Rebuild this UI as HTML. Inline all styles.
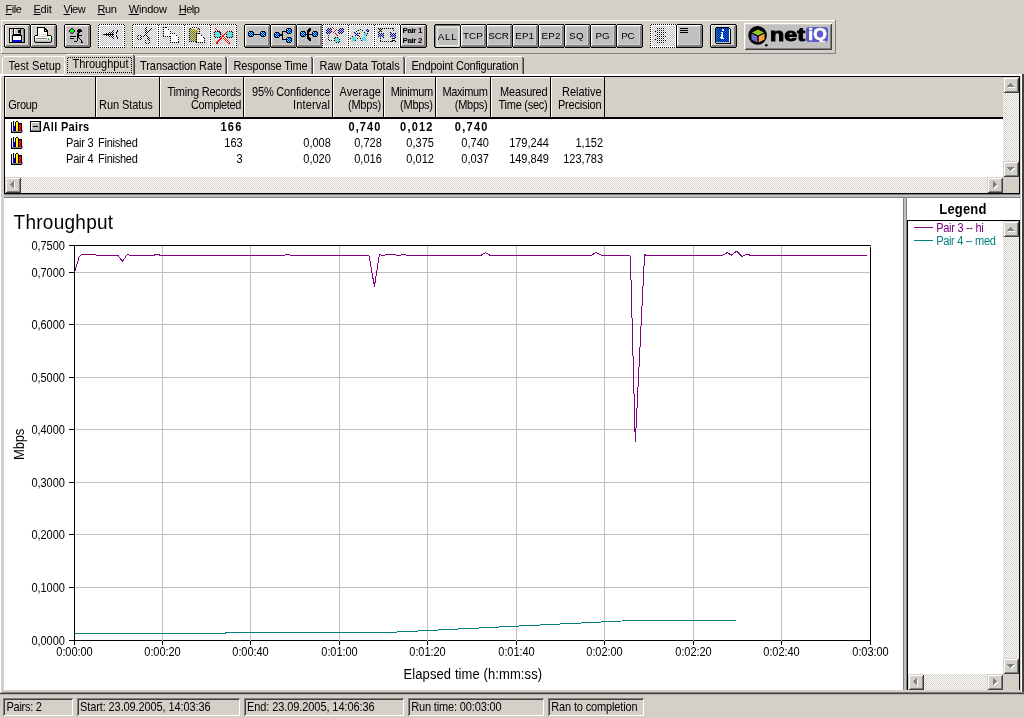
<!DOCTYPE html>
<html lang="en"><head><meta charset="utf-8"><title>Chariot - Throughput</title>
<style>
html,body{margin:0;padding:0}
body{width:1024px;height:718px;overflow:hidden;background:#d4d0c8;position:relative;font-family:"Liberation Sans",sans-serif;font-size:11px;color:#000}
#app{position:absolute;left:0;top:0;width:1024px;height:718px;overflow:hidden;will-change:transform}
#app div,#app span.t,.abs{position:absolute}
.t{white-space:nowrap;line-height:13px;font-size:11px}
.u{transform:scaleY(1.125);transform-origin:0 10px}
.u13{transform:scaleY(1.11);transform-origin:0 12px}
.u19{transform:scaleY(1.077);transform-origin:0 17px}
.t u{text-decoration:underline;text-decoration-thickness:1px;text-underline-offset:1px;text-decoration-skip-ink:none}
.b::before{content:"";position:absolute;left:1px;right:1px;top:0;bottom:0;border-top:1px solid #000;border-bottom:1px solid #000}
.b::after{content:"";position:absolute;top:1px;bottom:1px;left:0;right:0;border-left:1px solid #000;border-right:1px solid #000}
.b{background:linear-gradient(#fff,#fff) 1px 1px/24px 1px no-repeat,linear-gradient(#fff,#fff) 1px 1px/1px 21px no-repeat,linear-gradient(#808080,#808080) 2px 21px/24px 2px no-repeat,linear-gradient(#808080,#808080) 24px 2px/2px 21px no-repeat,linear-gradient(#808080,#808080) 25px 1px/1px 1px no-repeat,linear-gradient(#808080,#808080) 1px 22px/1px 1px no-repeat,linear-gradient(#d4d0c8,#d4d0c8) 1px 1px/25px 22px no-repeat}
.b.bp{background:linear-gradient(#808080,#808080) 1px 1px/25px 1px no-repeat,linear-gradient(#808080,#808080) 1px 1px/1px 22px no-repeat,linear-gradient(#d4d0c8,#d4d0c8) 1px 1px/25px 22px no-repeat}
.bd{background:repeating-conic-gradient(#000 0 25%,#fff 0 50%) 0 0/2px 2px}
.bd i{position:absolute;left:1px;top:1px;right:1px;bottom:1px;background:#fff}
.bd b{position:absolute;left:2px;top:2px;right:2px;bottom:2px;background:repeating-conic-gradient(#c0c0c0 0 25%,#fff 0 50%) 0 0/2px 2px}
.rb{background:#d4d0c8;box-shadow:inset 1px 1px 0 #fff,inset -1px -1px 0 #404040,inset 2px 2px 0 #d4d0c8,inset -2px -2px 0 #808080}
.sb{width:16px;height:16px;background:#d4d0c8;box-shadow:inset 1px 1px 0 #d4d0c8,inset -1px -1px 0 #404040,inset 2px 2px 0 #fff,inset -2px -2px 0 #808080}
.trk{background:repeating-conic-gradient(#fff 0 25%,#d4d0c8 0 50%) 0 0/2px 2px}
.sf{box-shadow:inset 1px 1px 0 #808080,inset -1px -1px 0 #fff,inset 2px 2px 0 #404040,inset -2px -2px 0 #d4d0c8}
.focus{background:repeating-conic-gradient(#000 0 25%,#d4d0c8 0 50%) 1px 1px/2px 2px}
.focus i{position:absolute;left:1px;top:1px;right:1px;bottom:1px;background:#d4d0c8}
</style></head>
<body><div id="app">
<span class="t " style="letter-spacing:-0.431px;left:5.50px;top:3px"><u>F</u>ile</span>
<span class="t " style="letter-spacing:-0.239px;left:33.50px;top:3px"><u>E</u>dit</span>
<span class="t " style="letter-spacing:-0.486px;left:63.50px;top:3px"><u>V</u>iew</span>
<span class="t " style="letter-spacing:-0.393px;left:97.50px;top:3px"><u>R</u>un</span>
<span class="t " style="letter-spacing:-0.171px;left:128.70px;top:3px"><u>W</u>indow</span>
<span class="t " style="letter-spacing:-0.506px;left:178.70px;top:3px"><u>H</u>elp</span>
<div style="left:1px;top:20px;width:835px;height:1px;background:#fff;"></div>
<div style="left:1px;top:20px;width:1px;height:34px;background:#fff;"></div>
<div style="left:1px;top:53px;width:835px;height:1px;background:#808080;"></div>
<div style="left:835px;top:20px;width:1px;height:34px;background:#808080;"></div>
<div class="b" style="left:4px;top:24px;width:27px;height:24px"></div>
<div class="b" style="left:30px;top:24px;width:27px;height:24px"></div>
<div class="b" style="left:64px;top:24px;width:27px;height:24px"></div>
<div class="bd" style="left:98px;top:24px;width:27px;height:24px"><i></i><b></b></div>
<div class="bd" style="left:132px;top:24px;width:27px;height:24px"><i></i><b></b></div>
<div class="bd" style="left:158px;top:24px;width:27px;height:24px"><i></i><b></b></div>
<div class="bd" style="left:184px;top:24px;width:27px;height:24px"><i></i><b></b></div>
<div class="bd" style="left:210px;top:24px;width:27px;height:24px"><i></i><b></b></div>
<div class="b" style="left:244px;top:24px;width:27px;height:24px"></div>
<div class="b" style="left:270px;top:24px;width:27px;height:24px"></div>
<div class="b" style="left:296px;top:24px;width:27px;height:24px"></div>
<div class="bd" style="left:322px;top:24px;width:27px;height:24px"><i></i><b></b></div>
<div class="bd" style="left:348px;top:24px;width:27px;height:24px"><i></i><b></b></div>
<div class="bd" style="left:374px;top:24px;width:27px;height:24px"><i></i><b></b></div>
<div class="b" style="left:400px;top:24px;width:27px;height:24px"></div>
<div class="b bp" style="left:434px;top:24px;width:27px;height:24px"></div>
<div class="b" style="left:460px;top:24px;width:27px;height:24px"></div>
<div class="b" style="left:486px;top:24px;width:27px;height:24px"></div>
<div class="b" style="left:512px;top:24px;width:27px;height:24px"></div>
<div class="b" style="left:538px;top:24px;width:27px;height:24px"></div>
<div class="b" style="left:564px;top:24px;width:27px;height:24px"></div>
<div class="b" style="left:590px;top:24px;width:27px;height:24px"></div>
<div class="b" style="left:616px;top:24px;width:27px;height:24px"></div>
<div class="bd" style="left:650px;top:24px;width:27px;height:24px"><i></i><b></b></div>
<div class="b" style="left:676px;top:24px;width:27px;height:24px"></div>
<div class="b" style="left:710px;top:24px;width:27px;height:24px"></div>
<div class="rb" style="left:744px;top:23px;width:88px;height:27px"><i style="background:#c0c0c0;position:absolute;left:2px;top:2px;right:2px;bottom:2px"></i></div>
<svg class="abs" style="left:0;top:0" width="1024" height="60" shape-rendering="crispEdges"><defs><pattern id="p0" width="2" height="2" patternUnits="userSpaceOnUse"><rect x="0" y="0" width="1" height="1" fill="#fff"/><rect x="1" y="1" width="1" height="1" fill="#fff"/></pattern><pattern id="p1" width="2" height="2" patternUnits="userSpaceOnUse"><rect x="0" y="0" width="1" height="1" fill="#000"/><rect x="1" y="1" width="1" height="1" fill="#000"/></pattern><pattern id="p2" width="2" height="2" patternUnits="userSpaceOnUse"><rect x="0" y="0" width="1" height="1" fill="#808000"/><rect x="1" y="1" width="1" height="1" fill="#808000"/></pattern><pattern id="p3" width="2" height="2" patternUnits="userSpaceOnUse"><rect x="0" y="0" width="1" height="1" fill="#00ffff"/><rect x="1" y="1" width="1" height="1" fill="#00ffff"/></pattern><pattern id="p4" width="2" height="2" patternUnits="userSpaceOnUse"><rect x="1" y="0" width="1" height="1" fill="#00ffff"/><rect x="0" y="1" width="1" height="1" fill="#00ffff"/></pattern><pattern id="p5" width="2" height="2" patternUnits="userSpaceOnUse"><rect x="0" y="0" width="1" height="1" fill="#0000ff"/><rect x="1" y="1" width="1" height="1" fill="#0000ff"/></pattern><pattern id="p6" width="2" height="2" patternUnits="userSpaceOnUse"><rect x="0" y="0" width="1" height="1" fill="#008080"/><rect x="1" y="1" width="1" height="1" fill="#008080"/></pattern></defs><rect x="9" y="28" width="16" height="15" fill="#000"/><rect x="10" y="29" width="14" height="13" fill="#c0c0c0"/><rect x="10" y="29" width="1" height="13" fill="#fff"/><rect x="24" y="28" width="1" height="1" fill="#d4d0c8"/><rect x="13" y="29" width="8" height="6" fill="#000"/><rect x="14" y="29" width="6" height="5" fill="#d4d0c8"/><rect x="18" y="30" width="2" height="3" fill="#000"/><rect x="14" y="29" width="1" height="5" fill="#fff"/><rect x="12" y="35" width="10" height="7" fill="#000"/><rect x="13" y="36" width="8" height="4" fill="#fff"/><rect x="13" y="40" width="8" height="2" fill="#0000ff"/><rect x="23" y="29" width="1" height="13" fill="#808080"/><polygon points="37,27 44,27 48,31 48,36 37,36" fill="#000"/><polygon points="38,28 43.5,28 47,31.5 47,36 38,36" fill="#fff"/><rect x="44" y="28" width="1" height="3" fill="#000"/><rect x="44" y="31" width="3" height="1" fill="#000"/><rect x="45" y="29" width="1" height="1" fill="#000"/><rect x="46" y="30" width="1" height="1" fill="#000"/><rect x="45" y="30" width="1" height="1" fill="#d4d0c8"/><rect x="39" y="34" width="1" height="1" fill="#c0c0c0"/><rect x="41" y="34" width="1" height="1" fill="#c0c0c0"/><rect x="43" y="34" width="1" height="1" fill="#c0c0c0"/><rect x="45" y="34" width="1" height="1" fill="#c0c0c0"/><rect x="35" y="35" width="3" height="1" fill="#000"/><rect x="47" y="35" width="4" height="1" fill="#000"/><rect x="34" y="36" width="1" height="6" fill="#000"/><rect x="51" y="36" width="1" height="6" fill="#000"/><rect x="35" y="42" width="16" height="1" fill="#000"/><rect x="35" y="36" width="3" height="1" fill="#fff"/><rect x="48" y="36" width="3" height="1" fill="#fff"/><rect x="35" y="37" width="16" height="1" fill="#fff"/><rect x="35" y="38" width="16" height="1" fill="#fff"/><rect x="36" y="38" width="11" height="1" fill="#808080"/><rect x="35" y="39" width="16" height="1" fill="#e8e8e8"/><rect x="35" y="40" width="16" height="1" fill="#d4d0c8"/><rect x="35" y="41" width="16" height="1" fill="#b0b0b0"/><rect x="48" y="38" width="1" height="2" fill="#00c000"/><rect x="67" y="27" width="20" height="17" fill="#c0c0c0"/><rect x="247" y="27" width="20" height="17" fill="#c0c0c0"/><rect x="273" y="27" width="20" height="17" fill="#c0c0c0"/><rect x="299" y="27" width="20" height="17" fill="#c0c0c0"/><rect x="403" y="27" width="20" height="17" fill="#c0c0c0"/><rect x="463" y="27" width="20" height="17" fill="#c0c0c0"/><rect x="489" y="27" width="20" height="17" fill="#c0c0c0"/><rect x="515" y="27" width="20" height="17" fill="#c0c0c0"/><rect x="541" y="27" width="20" height="17" fill="#c0c0c0"/><rect x="567" y="27" width="20" height="17" fill="#c0c0c0"/><rect x="593" y="27" width="20" height="17" fill="#c0c0c0"/><rect x="619" y="27" width="20" height="17" fill="#c0c0c0"/><rect x="679" y="27" width="20" height="17" fill="#c0c0c0"/><rect x="438" y="28" width="20" height="17" fill="#c0c0c0"/><rect x="437" y="27" width="22" height="1" fill="url(#p0)"/><rect x="437" y="45" width="22" height="1" fill="url(#p0)"/><rect x="437" y="27" width="1" height="19" fill="url(#p0)"/><rect x="458" y="27" width="1" height="19" fill="url(#p0)"/><rect x="71" y="28" width="2" height="1" fill="#400040"/><rect x="71" y="33" width="2" height="1" fill="#400040"/><rect x="69" y="30" width="1" height="2" fill="#400040"/><rect x="74" y="30" width="1" height="2" fill="#400040"/><rect x="70" y="29" width="1" height="1" fill="#400040"/><rect x="73" y="29" width="1" height="1" fill="#400040"/><rect x="70" y="32" width="1" height="1" fill="#400040"/><rect x="73" y="32" width="1" height="1" fill="#400040"/><rect x="71" y="29" width="2" height="4" fill="#00ff00"/><rect x="70" y="30" width="4" height="2" fill="#00ff00"/><rect x="78" y="29" width="3" height="1" fill="#000"/><rect x="77" y="30" width="5" height="2" fill="#000"/><rect x="78" y="32" width="2" height="1" fill="#000"/><rect x="77" y="33" width="2" height="1" fill="#000"/><rect x="77" y="34" width="2" height="4" fill="#000"/><rect x="77" y="38" width="1" height="3" fill="#000"/><rect x="78" y="35" width="4" height="1" fill="#000"/><rect x="70" y="36" width="6" height="1" fill="#000"/><rect x="70" y="38" width="4" height="1" fill="#000"/><rect x="74" y="41" width="3" height="1" fill="#000"/><rect x="79" y="38" width="1" height="1" fill="#000"/><rect x="80" y="39" width="1" height="1" fill="#000"/><rect x="81" y="40" width="1" height="1" fill="#000"/><rect x="81" y="41" width="1" height="1" fill="#000"/><rect x="81" y="42" width="1" height="1" fill="#000"/><rect x="82" y="42" width="1" height="1" fill="#000"/><rect x="103" y="34" width="1" height="1" fill="#000"/><rect x="105" y="34" width="1" height="1" fill="#000"/><rect x="106" y="33" width="1" height="1" fill="#000"/><rect x="106" y="35" width="1" height="1" fill="#000"/><rect x="107" y="34" width="1" height="1" fill="#000"/><rect x="108" y="33" width="1" height="1" fill="#000"/><rect x="108" y="35" width="1" height="1" fill="#000"/><rect x="109" y="32" width="1" height="1" fill="#000"/><rect x="109" y="34" width="1" height="1" fill="#000"/><rect x="109" y="36" width="1" height="1" fill="#000"/><rect x="110" y="33" width="1" height="1" fill="#000"/><rect x="110" y="35" width="1" height="1" fill="#000"/><rect x="111" y="32" width="1" height="1" fill="#000"/><rect x="111" y="34" width="1" height="1" fill="#000"/><rect x="111" y="36" width="1" height="1" fill="#000"/><rect x="112" y="31" width="1" height="1" fill="#000"/><rect x="112" y="33" width="1" height="1" fill="#000"/><rect x="112" y="35" width="1" height="1" fill="#000"/><rect x="112" y="37" width="1" height="1" fill="#000"/><rect x="113" y="30" width="1" height="1" fill="#000"/><rect x="113" y="32" width="1" height="1" fill="#000"/><rect x="113" y="34" width="1" height="1" fill="#000"/><rect x="113" y="36" width="1" height="1" fill="#000"/><rect x="113" y="38" width="1" height="1" fill="#000"/><rect x="103" y="34" width="11" height="1" fill="url(#p1)"/><rect x="117" y="30" width="1" height="1" fill="#000"/><rect x="117" y="31" width="1" height="1" fill="#000"/><rect x="116" y="32" width="1" height="1" fill="#000"/><rect x="116" y="33" width="1" height="1" fill="#000"/><rect x="116" y="35" width="1" height="1" fill="#000"/><rect x="116" y="36" width="1" height="1" fill="#000"/><rect x="117" y="37" width="1" height="1" fill="#000"/><rect x="117" y="38" width="1" height="1" fill="#000"/><rect x="150" y="28" width="1" height="1" fill="#000"/><rect x="149" y="29" width="1" height="1" fill="#000"/><rect x="148" y="30" width="1" height="1" fill="#000"/><rect x="147" y="31" width="1" height="1" fill="#000"/><rect x="146" y="32" width="1" height="1" fill="#000"/><rect x="145" y="33" width="1" height="1" fill="#000"/><rect x="144" y="34" width="1" height="1" fill="#000"/><rect x="143" y="35" width="1" height="1" fill="#000"/><rect x="142" y="36" width="1" height="1" fill="#000"/><rect x="151" y="28" width="1" height="1" fill="#000"/><rect x="150" y="29" width="1" height="1" fill="#000"/><rect x="149" y="30" width="1" height="1" fill="#000"/><rect x="148" y="31" width="1" height="1" fill="#000"/><rect x="147" y="32" width="1" height="1" fill="#000"/><rect x="146" y="33" width="1" height="1" fill="#000"/><rect x="145" y="34" width="1" height="1" fill="#000"/><rect x="144" y="35" width="1" height="1" fill="#000"/><rect x="143" y="36" width="1" height="1" fill="#000"/><rect x="145" y="27" width="2" height="7" fill="#000"/><rect x="145" y="34" width="1" height="1" fill="#000"/><rect x="146" y="35" width="1" height="1" fill="#000"/><rect x="146" y="36" width="1" height="1" fill="#000"/><rect x="147" y="37" width="1" height="1" fill="#000"/><rect x="148" y="38" width="1" height="1" fill="#000"/><rect x="148" y="39" width="1" height="1" fill="#000"/><rect x="149" y="40" width="1" height="1" fill="#000"/><rect x="146" y="34" width="1" height="1" fill="#000"/><rect x="147" y="35" width="1" height="1" fill="#000"/><rect x="147" y="36" width="1" height="1" fill="#000"/><rect x="148" y="37" width="1" height="1" fill="#000"/><rect x="149" y="38" width="1" height="1" fill="#000"/><rect x="149" y="39" width="1" height="1" fill="#000"/><rect x="150" y="40" width="1" height="1" fill="#000"/><rect x="138" y="35" width="3" height="1" fill="#000"/><rect x="137" y="36" width="1" height="3" fill="#000"/><rect x="138" y="39" width="3" height="1" fill="#000"/><rect x="141" y="36" width="1" height="3" fill="#000"/><rect x="140" y="37" width="2" height="1" fill="#000"/><rect x="145" y="39" width="1" height="4" fill="#000"/><rect x="146" y="43" width="3" height="1" fill="#000"/><rect x="149" y="40" width="1" height="3" fill="#000"/><rect x="146" y="38" width="3" height="1" fill="#000"/><rect x="136" y="26" width="17" height="19" fill="url(#p0)"/><polygon points="164,28 167,28 171,32 171,37 164,37" fill="#fff"/><polygon points="171,34 175,34 178,37 178,42 171,42" fill="#fff"/><rect x="163" y="27" width="1" height="1" fill="#000"/><rect x="165" y="27" width="1" height="1" fill="#000"/><rect x="163" y="27" width="1" height="1" fill="#000"/><rect x="163" y="29" width="1" height="1" fill="#000"/><rect x="163" y="31" width="1" height="1" fill="#000"/><rect x="163" y="33" width="1" height="1" fill="#000"/><rect x="163" y="35" width="1" height="1" fill="#000"/><rect x="163" y="36" width="1" height="1" fill="#000"/><rect x="165" y="36" width="1" height="1" fill="#000"/><rect x="167" y="36" width="1" height="1" fill="#000"/><rect x="169" y="36" width="1" height="1" fill="#000"/><rect x="166" y="27" width="1" height="1" fill="#000"/><rect x="168" y="29" width="1" height="1" fill="#000"/><rect x="170" y="31" width="1" height="1" fill="#000"/><rect x="170" y="31" width="1" height="1" fill="#000"/><rect x="170" y="33" width="1" height="1" fill="#000"/><rect x="170" y="33" width="1" height="1" fill="#000"/><rect x="172" y="33" width="1" height="1" fill="#000"/><rect x="174" y="33" width="1" height="1" fill="#000"/><rect x="170" y="36" width="1" height="1" fill="#000"/><rect x="170" y="38" width="1" height="1" fill="#000"/><rect x="170" y="40" width="1" height="1" fill="#000"/><rect x="170" y="42" width="1" height="1" fill="#000"/><rect x="170" y="42" width="1" height="1" fill="#000"/><rect x="172" y="42" width="1" height="1" fill="#000"/><rect x="174" y="42" width="1" height="1" fill="#000"/><rect x="176" y="42" width="1" height="1" fill="#000"/><rect x="178" y="42" width="1" height="1" fill="#000"/><rect x="174" y="33" width="1" height="1" fill="#000"/><rect x="176" y="35" width="1" height="1" fill="#000"/><rect x="178" y="37" width="1" height="1" fill="#000"/><rect x="178" y="37" width="1" height="1" fill="#000"/><rect x="178" y="39" width="1" height="1" fill="#000"/><rect x="178" y="41" width="1" height="1" fill="#000"/><rect x="190" y="29" width="8" height="12" fill="url(#p2)"/><rect x="189" y="29" width="1" height="1" fill="#000"/><rect x="189" y="31" width="1" height="1" fill="#000"/><rect x="189" y="33" width="1" height="1" fill="#000"/><rect x="189" y="35" width="1" height="1" fill="#000"/><rect x="189" y="37" width="1" height="1" fill="#000"/><rect x="189" y="39" width="1" height="1" fill="#000"/><rect x="189" y="41" width="1" height="1" fill="#000"/><rect x="189" y="41" width="1" height="1" fill="#000"/><rect x="191" y="41" width="1" height="1" fill="#000"/><rect x="193" y="41" width="1" height="1" fill="#000"/><rect x="195" y="41" width="1" height="1" fill="#000"/><rect x="199" y="29" width="1" height="1" fill="#000"/><rect x="199" y="31" width="1" height="1" fill="#000"/><rect x="199" y="33" width="1" height="1" fill="#000"/><rect x="190" y="28" width="1" height="1" fill="#000"/><rect x="192" y="27" width="1" height="1" fill="#000"/><rect x="194" y="27" width="1" height="1" fill="#000"/><rect x="196" y="27" width="1" height="1" fill="#000"/><rect x="198" y="28" width="1" height="1" fill="#000"/><rect x="193" y="30" width="1" height="1" fill="#ffff00"/><rect x="195" y="29" width="1" height="1" fill="#ffff00"/><rect x="196" y="29" width="1" height="1" fill="#ffff00"/><rect x="197" y="30" width="1" height="1" fill="#ffff00"/><polygon points="197,34 200,34 204,38 204,42 197,42" fill="#fff"/><rect x="196" y="33" width="1" height="1" fill="#000"/><rect x="198" y="33" width="1" height="1" fill="#000"/><rect x="196" y="33" width="1" height="1" fill="#000"/><rect x="196" y="35" width="1" height="1" fill="#000"/><rect x="196" y="37" width="1" height="1" fill="#000"/><rect x="196" y="39" width="1" height="1" fill="#000"/><rect x="196" y="41" width="1" height="1" fill="#000"/><rect x="196" y="42" width="1" height="1" fill="#000"/><rect x="198" y="42" width="1" height="1" fill="#000"/><rect x="200" y="42" width="1" height="1" fill="#000"/><rect x="202" y="42" width="1" height="1" fill="#000"/><rect x="204" y="42" width="1" height="1" fill="#000"/><rect x="199" y="33" width="1" height="1" fill="#000"/><rect x="201" y="35" width="1" height="1" fill="#000"/><rect x="203" y="37" width="1" height="1" fill="#000"/><rect x="204" y="38" width="1" height="1" fill="#000"/><rect x="204" y="40" width="1" height="1" fill="#000"/><rect x="204" y="42" width="1" height="1" fill="#000"/><rect x="215" y="32" width="5" height="5" fill="url(#p3)"/><rect x="215" y="31" width="5" height="1" fill="url(#p1)"/><rect x="215" y="37" width="5" height="1" fill="url(#p1)"/><rect x="214" y="32" width="1" height="5" fill="url(#p1)"/><rect x="220" y="32" width="1" height="5" fill="url(#p1)"/><rect x="227" y="32" width="5" height="5" fill="url(#p3)"/><rect x="227" y="31" width="5" height="1" fill="url(#p1)"/><rect x="227" y="37" width="5" height="1" fill="url(#p1)"/><rect x="226" y="32" width="1" height="5" fill="url(#p1)"/><rect x="232" y="32" width="1" height="5" fill="url(#p1)"/><rect x="215" y="28" width="1" height="1" fill="#ff0000"/><rect x="216" y="29" width="1" height="1" fill="#ff0000"/><rect x="217" y="30" width="1" height="1" fill="#ff0000"/><rect x="218" y="31" width="1" height="1" fill="#ff0000"/><rect x="219" y="32" width="1" height="1" fill="#ff0000"/><rect x="220" y="33" width="1" height="1" fill="#ff0000"/><rect x="221" y="34" width="1" height="1" fill="#ff0000"/><rect x="222" y="35" width="1" height="1" fill="#ff0000"/><rect x="223" y="36" width="1" height="1" fill="#ff0000"/><rect x="224" y="37" width="1" height="1" fill="#ff0000"/><rect x="225" y="38" width="1" height="1" fill="#ff0000"/><rect x="226" y="39" width="1" height="1" fill="#ff0000"/><rect x="227" y="40" width="1" height="1" fill="#ff0000"/><rect x="228" y="41" width="1" height="1" fill="#ff0000"/><rect x="229" y="42" width="1" height="1" fill="#ff0000"/><rect x="227" y="31" width="1" height="1" fill="#ff0000"/><rect x="226" y="32" width="1" height="1" fill="#ff0000"/><rect x="225" y="33" width="1" height="1" fill="#ff0000"/><rect x="224" y="34" width="1" height="1" fill="#ff0000"/><rect x="223" y="35" width="1" height="1" fill="#ff0000"/><rect x="222" y="36" width="1" height="1" fill="#ff0000"/><rect x="221" y="37" width="1" height="1" fill="#ff0000"/><rect x="220" y="38" width="1" height="1" fill="#ff0000"/><rect x="219" y="39" width="1" height="1" fill="#ff0000"/><rect x="218" y="40" width="1" height="1" fill="#ff0000"/><rect x="217" y="41" width="1" height="1" fill="#ff0000"/><rect x="216" y="42" width="1" height="1" fill="#ff0000"/><rect x="223" y="38" width="1" height="1" fill="#ff0000"/><rect x="224" y="39" width="1" height="1" fill="#ff0000"/><rect x="225" y="40" width="1" height="1" fill="#ff0000"/><rect x="226" y="41" width="1" height="1" fill="#ff0000"/><rect x="227" y="42" width="1" height="1" fill="#ff0000"/><rect x="221" y="38" width="1" height="1" fill="#ff0000"/><rect x="220" y="39" width="1" height="1" fill="#ff0000"/><rect x="219" y="40" width="1" height="1" fill="#ff0000"/><rect x="218" y="41" width="1" height="1" fill="#ff0000"/><rect x="217" y="42" width="1" height="1" fill="#ff0000"/><rect x="216" y="43" width="2" height="1" fill="#ff0000"/><rect x="228" y="43" width="2" height="1" fill="#ff0000"/><rect x="249" y="31" width="4" height="1" fill="#000"/><rect x="249" y="36" width="4" height="1" fill="#000"/><rect x="248" y="32" width="1" height="4" fill="#000"/><rect x="253" y="32" width="1" height="4" fill="#000"/><rect x="249" y="32" width="4" height="4" fill="#0000ff"/><rect x="249" y="32" width="4" height="4" fill="url(#p4)"/><rect x="249" y="32" width="1" height="1" fill="#fff"/><rect x="261" y="31" width="4" height="1" fill="#000"/><rect x="261" y="36" width="4" height="1" fill="#000"/><rect x="260" y="32" width="1" height="4" fill="#000"/><rect x="265" y="32" width="1" height="4" fill="#000"/><rect x="261" y="32" width="4" height="4" fill="#0000ff"/><rect x="261" y="32" width="4" height="4" fill="url(#p4)"/><rect x="261" y="32" width="1" height="1" fill="#fff"/><rect x="254" y="34" width="6" height="1" fill="#000"/><rect x="275" y="32" width="4" height="1" fill="#000"/><rect x="275" y="37" width="4" height="1" fill="#000"/><rect x="274" y="33" width="1" height="4" fill="#000"/><rect x="279" y="33" width="1" height="4" fill="#000"/><rect x="275" y="33" width="4" height="4" fill="#0000ff"/><rect x="275" y="33" width="4" height="4" fill="url(#p3)"/><rect x="275" y="33" width="1" height="1" fill="#fff"/><rect x="287" y="28" width="4" height="1" fill="#000"/><rect x="287" y="33" width="4" height="1" fill="#000"/><rect x="286" y="29" width="1" height="4" fill="#000"/><rect x="291" y="29" width="1" height="4" fill="#000"/><rect x="287" y="29" width="4" height="4" fill="#0000ff"/><rect x="287" y="29" width="4" height="4" fill="url(#p3)"/><rect x="287" y="29" width="1" height="1" fill="#fff"/><rect x="287" y="37" width="4" height="1" fill="#000"/><rect x="287" y="42" width="4" height="1" fill="#000"/><rect x="286" y="38" width="1" height="4" fill="#000"/><rect x="291" y="38" width="1" height="4" fill="#000"/><rect x="287" y="38" width="4" height="4" fill="#0000ff"/><rect x="287" y="38" width="4" height="4" fill="url(#p4)"/><rect x="287" y="38" width="1" height="1" fill="#fff"/><rect x="280" y="34" width="3" height="2" fill="#000"/><rect x="282" y="31" width="1" height="9" fill="#000"/><rect x="282" y="31" width="4" height="1" fill="#000"/><rect x="282" y="39" width="4" height="1" fill="#000"/><rect x="301" y="31" width="4" height="1" fill="#000"/><rect x="301" y="36" width="4" height="1" fill="#000"/><rect x="300" y="32" width="1" height="4" fill="#000"/><rect x="305" y="32" width="1" height="4" fill="#000"/><rect x="301" y="32" width="4" height="4" fill="#0000ff"/><rect x="301" y="32" width="4" height="4" fill="url(#p4)"/><rect x="301" y="32" width="1" height="1" fill="#fff"/><rect x="313" y="31" width="4" height="1" fill="#000"/><rect x="313" y="36" width="4" height="1" fill="#000"/><rect x="312" y="32" width="1" height="4" fill="#000"/><rect x="317" y="32" width="1" height="4" fill="#000"/><rect x="313" y="32" width="4" height="4" fill="#0000ff"/><rect x="313" y="32" width="4" height="4" fill="url(#p4)"/><rect x="313" y="32" width="1" height="1" fill="#fff"/><rect x="306" y="34" width="6" height="1" fill="#000"/><rect x="309" y="28" width="2" height="1" fill="#000"/><rect x="308" y="29" width="3" height="1" fill="#000"/><rect x="307" y="30" width="4" height="1" fill="#000"/><rect x="307" y="31" width="3" height="1" fill="#000"/><rect x="307" y="32" width="2" height="5" fill="#000"/><rect x="307" y="37" width="3" height="1" fill="#000"/><rect x="307" y="38" width="4" height="1" fill="#000"/><rect x="308" y="39" width="3" height="1" fill="#000"/><rect x="309" y="40" width="2" height="1" fill="#000"/><rect x="327" y="29" width="4" height="4" fill="url(#p5)"/><rect x="327" y="28" width="4" height="1" fill="url(#p1)"/><rect x="327" y="33" width="4" height="1" fill="url(#p1)"/><rect x="326" y="29" width="1" height="4" fill="url(#p1)"/><rect x="331" y="29" width="1" height="4" fill="url(#p1)"/><rect x="339" y="29" width="4" height="4" fill="url(#p5)"/><rect x="339" y="28" width="4" height="1" fill="url(#p1)"/><rect x="339" y="33" width="4" height="1" fill="url(#p1)"/><rect x="338" y="29" width="1" height="4" fill="url(#p1)"/><rect x="343" y="29" width="1" height="4" fill="url(#p1)"/><rect x="335" y="38" width="4" height="4" fill="url(#p3)"/><rect x="335" y="37" width="4" height="1" fill="url(#p1)"/><rect x="335" y="42" width="4" height="1" fill="url(#p1)"/><rect x="334" y="38" width="1" height="4" fill="url(#p1)"/><rect x="339" y="38" width="1" height="4" fill="url(#p1)"/><rect x="332" y="27" width="1" height="1" fill="#ff0000"/><rect x="333" y="28" width="1" height="1" fill="#ff0000"/><rect x="336" y="29" width="1" height="1" fill="#ff0000"/><rect x="335" y="30" width="1" height="1" fill="#ff0000"/><rect x="334" y="31" width="1" height="1" fill="#ff0000"/><rect x="333" y="32" width="1" height="1" fill="#ff0000"/><rect x="335" y="33" width="1" height="1" fill="#ff0000"/><rect x="336" y="34" width="1" height="1" fill="#ff0000"/><rect x="337" y="35" width="1" height="1" fill="#ff0000"/><rect x="328" y="35" width="1" height="1" fill="#000"/><rect x="328" y="37" width="1" height="1" fill="#000"/><rect x="328" y="39" width="1" height="1" fill="#000"/><rect x="329" y="40" width="1" height="1" fill="#000"/><rect x="331" y="40" width="1" height="1" fill="#000"/><rect x="355" y="33" width="3" height="3" fill="url(#p5)"/><rect x="352" y="37" width="4" height="4" fill="url(#p3)"/><rect x="366" y="29" width="3" height="3" fill="url(#p5)"/><rect x="362" y="37" width="4" height="4" fill="url(#p3)"/><rect x="364" y="33" width="3" height="3" fill="url(#p3)"/><rect x="350" y="38" width="1" height="1" fill="#000"/><rect x="352" y="36" width="1" height="1" fill="#000"/><rect x="354" y="32" width="1" height="1" fill="#000"/><rect x="356" y="31" width="1" height="1" fill="#000"/><rect x="358" y="30" width="1" height="1" fill="#000"/><rect x="359" y="36" width="1" height="1" fill="#000"/><rect x="357" y="38" width="1" height="1" fill="#000"/><rect x="355" y="40" width="1" height="1" fill="#000"/><rect x="358" y="35" width="1" height="1" fill="#000"/><rect x="359" y="33" width="1" height="1" fill="#000"/><rect x="360" y="29" width="1" height="1" fill="#000"/><rect x="362" y="30" width="1" height="1" fill="#000"/><rect x="364" y="32" width="1" height="1" fill="#000"/><rect x="364" y="32" width="1" height="1" fill="#000"/><rect x="366" y="30" width="1" height="1" fill="#000"/><rect x="368" y="31" width="1" height="1" fill="#000"/><rect x="367" y="33" width="1" height="1" fill="#000"/><rect x="366" y="35" width="1" height="1" fill="#000"/><rect x="360" y="38" width="1" height="1" fill="#000"/><rect x="361" y="40" width="1" height="1" fill="#000"/><rect x="360" y="31" width="1" height="1" fill="#00ffff"/><rect x="379" y="33" width="4" height="4" fill="url(#p5)"/><rect x="391" y="33" width="4" height="4" fill="url(#p5)"/><rect x="378" y="32" width="1" height="6" fill="url(#p1)"/><rect x="383" y="32" width="1" height="6" fill="url(#p1)"/><rect x="390" y="32" width="1" height="6" fill="url(#p1)"/><rect x="395" y="32" width="1" height="6" fill="url(#p1)"/><rect x="380" y="28" width="1" height="1" fill="#000"/><rect x="382" y="28" width="1" height="1" fill="#000"/><rect x="384" y="28" width="1" height="1" fill="#000"/><rect x="386" y="28" width="1" height="1" fill="#000"/><rect x="388" y="28" width="1" height="1" fill="#000"/><rect x="390" y="28" width="1" height="1" fill="#000"/><rect x="392" y="28" width="1" height="1" fill="#000"/><rect x="380" y="41" width="1" height="1" fill="#000"/><rect x="382" y="41" width="1" height="1" fill="#000"/><rect x="384" y="41" width="1" height="1" fill="#000"/><rect x="386" y="41" width="1" height="1" fill="#000"/><rect x="388" y="41" width="1" height="1" fill="#000"/><rect x="390" y="41" width="1" height="1" fill="#000"/><rect x="392" y="41" width="1" height="1" fill="#000"/><rect x="380" y="28" width="1" height="1" fill="#000"/><rect x="380" y="30" width="1" height="1" fill="#000"/><rect x="380" y="38" width="1" height="1" fill="#000"/><rect x="380" y="40" width="1" height="1" fill="#000"/><rect x="393" y="28" width="1" height="1" fill="#000"/><rect x="393" y="30" width="1" height="1" fill="#000"/><rect x="393" y="38" width="1" height="1" fill="#000"/><rect x="393" y="40" width="1" height="1" fill="#000"/><rect x="378" y="28" width="1" height="1" fill="#000"/><rect x="382" y="28" width="1" height="1" fill="#000"/><rect x="379" y="29" width="1" height="1" fill="#000"/><rect x="381" y="29" width="1" height="1" fill="#000"/><rect x="379" y="31" width="1" height="1" fill="#000"/><rect x="381" y="31" width="1" height="1" fill="#000"/><rect x="392" y="38" width="1" height="1" fill="#000"/><rect x="394" y="38" width="1" height="1" fill="#000"/><rect x="392" y="40" width="1" height="1" fill="#000"/><rect x="394" y="40" width="1" height="1" fill="#000"/><rect x="391" y="41" width="1" height="1" fill="#000"/><rect x="395" y="41" width="1" height="1" fill="#000"/><rect x="657" y="28" width="1" height="1" fill="#000"/><rect x="659" y="28" width="1" height="1" fill="#000"/><rect x="661" y="28" width="1" height="1" fill="#000"/><rect x="663" y="28" width="1" height="1" fill="#000"/><rect x="657" y="30" width="1" height="1" fill="#000"/><rect x="659" y="30" width="1" height="1" fill="#000"/><rect x="661" y="30" width="1" height="1" fill="#000"/><rect x="663" y="30" width="1" height="1" fill="#000"/><rect x="657" y="32" width="1" height="1" fill="#000"/><rect x="659" y="32" width="1" height="1" fill="#000"/><rect x="661" y="32" width="1" height="1" fill="#000"/><rect x="663" y="32" width="1" height="1" fill="#000"/><rect x="657" y="34" width="1" height="1" fill="#000"/><rect x="659" y="34" width="1" height="1" fill="#000"/><rect x="661" y="34" width="1" height="1" fill="#000"/><rect x="663" y="34" width="1" height="1" fill="#000"/><rect x="657" y="36" width="1" height="1" fill="#000"/><rect x="659" y="36" width="1" height="1" fill="#000"/><rect x="661" y="36" width="1" height="1" fill="#000"/><rect x="663" y="36" width="1" height="1" fill="#000"/><rect x="657" y="38" width="1" height="1" fill="#000"/><rect x="659" y="38" width="1" height="1" fill="#000"/><rect x="661" y="38" width="1" height="1" fill="#000"/><rect x="663" y="38" width="1" height="1" fill="#000"/><rect x="657" y="40" width="1" height="1" fill="#000"/><rect x="659" y="40" width="1" height="1" fill="#000"/><rect x="661" y="40" width="1" height="1" fill="#000"/><rect x="663" y="40" width="1" height="1" fill="#000"/><rect x="657" y="42" width="1" height="1" fill="#000"/><rect x="659" y="42" width="1" height="1" fill="#000"/><rect x="661" y="42" width="1" height="1" fill="#000"/><rect x="663" y="42" width="1" height="1" fill="#000"/><rect x="655" y="31" width="1" height="1" fill="#000"/><rect x="665" y="32" width="1" height="1" fill="#000"/><rect x="655" y="35" width="1" height="1" fill="#000"/><rect x="665" y="36" width="1" height="1" fill="#000"/><rect x="655" y="39" width="1" height="1" fill="#000"/><rect x="665" y="40" width="1" height="1" fill="#000"/><rect x="680" y="28" width="8" height="1" fill="#000"/><rect x="680" y="30" width="8" height="1" fill="#000"/><rect x="680" y="32" width="8" height="1" fill="#000"/><rect x="716" y="27" width="13" height="1" fill="#000"/><rect x="715" y="28" width="1" height="15" fill="#000"/><rect x="716" y="43" width="15" height="1" fill="#000"/><rect x="730" y="29" width="1" height="14" fill="#000"/><rect x="729" y="29" width="1" height="13" fill="#fff"/><rect x="729" y="28" width="1" height="1" fill="#000"/><rect x="716" y="28" width="13" height="14" fill="#0000ff"/><rect x="716" y="28" width="1" height="14" fill="#008080"/><rect x="717" y="28" width="12" height="14" fill="url(#p6)"/><rect x="716" y="42" width="13" height="1" fill="#c0c0c0"/><rect x="722" y="29" width="2" height="2" fill="#fff"/><rect x="721" y="32" width="2" height="1" fill="#fff"/><rect x="722" y="33" width="1" height="1" fill="#fff"/><rect x="721" y="34" width="2" height="3" fill="#fff"/><rect x="720" y="37" width="3" height="1" fill="#fff"/><rect x="721" y="38" width="3" height="1" fill="#fff"/></svg>
<span class="t" style="font-size:8px;line-height:12px;font-weight:bold;letter-spacing:-0.382px;left:402.5px;top:24.5px">Pair 1</span>
<span class="t" style="font-size:8px;line-height:12px;font-weight:bold;letter-spacing:-0.382px;left:402.5px;top:34.5px">Pair 2</span>
<span class="t" style="font-size:9.8px;line-height:12px;letter-spacing:0.688px;left:437.8px;top:30.7px">ALL</span>
<span class="t" style="font-size:9.8px;line-height:12px;letter-spacing:0.067px;left:463.0px;top:29.7px">TCP</span>
<span class="t" style="font-size:9.8px;line-height:12px;letter-spacing:0.003px;left:488.2px;top:29.7px">SCR</span>
<span class="t" style="font-size:9.8px;line-height:12px;letter-spacing:0.059px;left:515.3px;top:29.7px">EP1</span>
<span class="t" style="font-size:9.8px;line-height:12px;letter-spacing:0.259px;left:541.4px;top:29.7px">EP2</span>
<span class="t" style="font-size:9.8px;line-height:12px;letter-spacing:0.420px;left:569.0px;top:29.7px">SQ</span>
<span class="t" style="font-size:9.8px;line-height:12px;letter-spacing:-0.080px;left:595.5px;top:29.7px">PG</span>
<span class="t" style="font-size:9.8px;line-height:12px;letter-spacing:-0.207px;left:621.3px;top:29.7px">PC</span>
<svg class="abs" style="left:746px;top:25px" width="84" height="23" viewBox="746 25 84 23">
<circle cx="757.6" cy="35.4" r="9.3" fill="#000"/>
<polygon points="758,29.5 764,32.5 758,35.5 752,32.5" fill="#8cc820"/>
<polygon points="751.5,33.5 757.3,36.5 757.3,42.5 751.5,39.5" fill="#6a6ad0"/>
<polygon points="764.5,33.5 758.7,36.5 758.7,42.5 764.5,39.5" fill="#f8a040"/>
<circle cx="766.3" cy="45.3" r="1.3" fill="#000"/>
<clipPath id="iqc"><rect x="806" y="27" width="22" height="15"/></clipPath><rect x="806" y="27" width="22" height="15" rx="3" fill="#5a5ac8"/>
<text x="770" y="41" font-family="Liberation Sans, sans-serif" font-weight="bold" font-size="18" textLength="35" lengthAdjust="spacingAndGlyphs" stroke="#000" stroke-width="0.9" fill="#000">net</text>
<text x="808.3" y="40.2" font-family="Liberation Sans, sans-serif" font-weight="bold" font-size="17" textLength="18.5" lengthAdjust="spacingAndGlyphs" stroke="#fff" stroke-width="0.6" fill="#fff" clip-path="url(#iqc)">iQ</text>
</svg>
<div style="left:1px;top:74px;width:63px;height:1px;background:#fff;"></div>
<div style="left:135px;top:74px;width:887px;height:1px;background:#fff;"></div>
<div style="left:1px;top:75px;width:1021px;height:1px;background:#fff;"></div>
<div style="left:4px;top:56px;width:60px;height:1px;background:#fff;"></div>
<div style="left:3px;top:57px;width:1px;height:1px;background:#fff;"></div>
<div style="left:2px;top:58px;width:1px;height:16px;background:#fff;"></div>
<div style="left:135px;top:56px;width:90px;height:1px;background:#fff;"></div>
<div style="left:225px;top:58px;width:1px;height:16px;background:#808080;"></div>
<div style="left:226px;top:58px;width:1px;height:16px;background:#404040;"></div>
<div style="left:225px;top:57px;width:1px;height:1px;background:#404040;"></div>
<div style="left:229px;top:56px;width:82px;height:1px;background:#fff;"></div>
<div style="left:228px;top:57px;width:1px;height:1px;background:#fff;"></div>
<div style="left:227px;top:58px;width:1px;height:16px;background:#fff;"></div>
<div style="left:311px;top:58px;width:1px;height:16px;background:#808080;"></div>
<div style="left:312px;top:58px;width:1px;height:16px;background:#404040;"></div>
<div style="left:311px;top:57px;width:1px;height:1px;background:#404040;"></div>
<div style="left:315px;top:56px;width:88px;height:1px;background:#fff;"></div>
<div style="left:314px;top:57px;width:1px;height:1px;background:#fff;"></div>
<div style="left:313px;top:58px;width:1px;height:16px;background:#fff;"></div>
<div style="left:403px;top:58px;width:1px;height:16px;background:#808080;"></div>
<div style="left:404px;top:58px;width:1px;height:16px;background:#404040;"></div>
<div style="left:403px;top:57px;width:1px;height:1px;background:#404040;"></div>
<div style="left:407px;top:56px;width:115px;height:1px;background:#fff;"></div>
<div style="left:406px;top:57px;width:1px;height:1px;background:#fff;"></div>
<div style="left:405px;top:58px;width:1px;height:16px;background:#fff;"></div>
<div style="left:522px;top:58px;width:1px;height:16px;background:#808080;"></div>
<div style="left:523px;top:58px;width:1px;height:16px;background:#404040;"></div>
<div style="left:522px;top:57px;width:1px;height:1px;background:#404040;"></div>
<div style="left:66px;top:54px;width:67px;height:1px;background:#fff;"></div>
<div style="left:65px;top:55px;width:1px;height:1px;background:#fff;"></div>
<div style="left:64px;top:56px;width:1px;height:18px;background:#fff;"></div>
<div style="left:133px;top:56px;width:1px;height:19px;background:#808080;"></div>
<div style="left:134px;top:56px;width:1px;height:19px;background:#404040;"></div>
<div style="left:133px;top:55px;width:1px;height:1px;background:#404040;"></div>
<div class="focus" style="left:67px;top:57px;width:65px;height:16px"><i></i></div>
<span class="t u" style="letter-spacing:0.052px;left:8.50px;top:60px">Test Setup</span>
<span class="t u" style="letter-spacing:-0.036px;left:72.50px;top:58px">Throughput</span>
<span class="t u" style="letter-spacing:-0.097px;left:140.10px;top:60px">Transaction Rate</span>
<span class="t u" style="letter-spacing:-0.187px;left:233.50px;top:60px">Response Time</span>
<span class="t u" style="letter-spacing:0.027px;left:319.50px;top:60px">Raw Data Totals</span>
<span class="t u" style="letter-spacing:-0.223px;left:411.50px;top:60px">Endpoint Configuration</span>
<div style="left:4px;top:76px;width:1016px;height:118px;background:#000;"></div>
<div style="left:5px;top:77px;width:1014px;height:116px;background:#fff;"></div>
<div style="left:5px;top:77px;width:998px;height:40px;background:#d4d0c8;"></div>
<div style="left:5px;top:117px;width:998px;height:2px;background:#000;"></div>
<div style="left:5px;top:77px;width:599px;height:1px;background:#fff;"></div>
<div style="left:5px;top:78px;width:1px;height:39px;background:#fff;"></div>
<div style="left:95px;top:77px;width:1px;height:40px;background:#000;"></div>
<div style="left:96px;top:78px;width:1px;height:39px;background:#fff;"></div>
<div style="left:159px;top:77px;width:1px;height:40px;background:#000;"></div>
<div style="left:160px;top:78px;width:1px;height:39px;background:#fff;"></div>
<div style="left:243px;top:77px;width:1px;height:40px;background:#000;"></div>
<div style="left:244px;top:78px;width:1px;height:39px;background:#fff;"></div>
<div style="left:332px;top:77px;width:1px;height:40px;background:#000;"></div>
<div style="left:333px;top:78px;width:1px;height:39px;background:#fff;"></div>
<div style="left:383px;top:77px;width:1px;height:40px;background:#000;"></div>
<div style="left:384px;top:78px;width:1px;height:39px;background:#fff;"></div>
<div style="left:435px;top:77px;width:1px;height:40px;background:#000;"></div>
<div style="left:436px;top:78px;width:1px;height:39px;background:#fff;"></div>
<div style="left:490px;top:77px;width:1px;height:40px;background:#000;"></div>
<div style="left:491px;top:78px;width:1px;height:39px;background:#fff;"></div>
<div style="left:550px;top:77px;width:1px;height:40px;background:#000;"></div>
<div style="left:551px;top:78px;width:1px;height:39px;background:#fff;"></div>
<div style="left:604px;top:77px;width:1px;height:40px;background:#000;"></div>
<span class="t u" style="letter-spacing:-0.284px;left:8.25px;top:99px">Group</span>
<span class="t u" style="letter-spacing:-0.062px;left:99.00px;top:99px">Run Status</span>
<span class="t u" style="letter-spacing:-0.215px;left:167.50px;top:86px">Timing Records</span>
<span class="t u" style="letter-spacing:-0.344px;left:191.00px;top:99px">Completed</span>
<span class="t u" style="letter-spacing:-0.180px;left:252.00px;top:86px">95% Confidence</span>
<span class="t u" style="letter-spacing:0.141px;left:293.00px;top:99px">Interval</span>
<span class="t u" style="letter-spacing:0.118px;left:339.50px;top:86px">Average</span>
<span class="t u" style="letter-spacing:-0.171px;left:347.90px;top:99px">(Mbps)</span>
<span class="t u" style="letter-spacing:-0.380px;left:390.75px;top:86px">Minimum</span>
<span class="t u" style="letter-spacing:-0.271px;left:400.10px;top:99px">(Mbps)</span>
<span class="t u" style="letter-spacing:-0.396px;left:442.50px;top:86px">Maximum</span>
<span class="t u" style="letter-spacing:-0.271px;left:454.80px;top:99px">(Mbps)</span>
<span class="t u" style="letter-spacing:-0.202px;left:500.10px;top:86px">Measured</span>
<span class="t u" style="letter-spacing:-0.264px;left:498.50px;top:99px">Time (sec)</span>
<span class="t u" style="letter-spacing:-0.030px;left:562.00px;top:86px">Relative</span>
<span class="t u" style="letter-spacing:-0.182px;left:557.90px;top:99px">Precision</span>
<svg class="abs" style="left:11px;top:121px" width="13" height="12" shape-rendering="crispEdges"><rect x="0" y="1" width="1" height="11" fill="#000"/><rect x="2" y="0" width="1" height="5" fill="#000"/><rect x="2" y="5" width="2" height="5" fill="#0000ff"/><rect x="4" y="4" width="1" height="6" fill="#000"/><rect x="4" y="1" width="1" height="9" fill="#000"/><rect x="5" y="0" width="2" height="1" fill="#000"/><rect x="5" y="1" width="2" height="9" fill="#ffff00"/><rect x="7" y="1" width="1" height="9" fill="#000"/><rect x="8" y="2" width="2" height="1" fill="#000"/><rect x="8" y="3" width="2" height="7" fill="#ff0000"/><rect x="10" y="2" width="1" height="8" fill="#000"/><rect x="1" y="10" width="10" height="1" fill="#808080"/><rect x="0" y="11" width="11" height="1" fill="#000"/><rect x="11" y="9" width="1" height="2" fill="#808080"/></svg>
<svg class="abs" style="left:11px;top:137px" width="13" height="12" shape-rendering="crispEdges"><rect x="0" y="1" width="1" height="11" fill="#000"/><rect x="2" y="0" width="1" height="5" fill="#000"/><rect x="2" y="5" width="2" height="5" fill="#0000ff"/><rect x="4" y="4" width="1" height="6" fill="#000"/><rect x="4" y="1" width="1" height="9" fill="#000"/><rect x="5" y="0" width="2" height="1" fill="#000"/><rect x="5" y="1" width="2" height="9" fill="#ffff00"/><rect x="7" y="1" width="1" height="9" fill="#000"/><rect x="8" y="2" width="2" height="1" fill="#000"/><rect x="8" y="3" width="2" height="7" fill="#ff0000"/><rect x="10" y="2" width="1" height="8" fill="#000"/><rect x="1" y="10" width="10" height="1" fill="#808080"/><rect x="0" y="11" width="11" height="1" fill="#000"/><rect x="11" y="9" width="1" height="2" fill="#808080"/></svg>
<svg class="abs" style="left:11px;top:153px" width="13" height="12" shape-rendering="crispEdges"><rect x="0" y="1" width="1" height="11" fill="#000"/><rect x="2" y="0" width="1" height="5" fill="#000"/><rect x="2" y="5" width="2" height="5" fill="#0000ff"/><rect x="4" y="4" width="1" height="6" fill="#000"/><rect x="4" y="1" width="1" height="9" fill="#000"/><rect x="5" y="0" width="2" height="1" fill="#000"/><rect x="5" y="1" width="2" height="9" fill="#ffff00"/><rect x="7" y="1" width="1" height="9" fill="#000"/><rect x="8" y="2" width="2" height="1" fill="#000"/><rect x="8" y="3" width="2" height="7" fill="#ff0000"/><rect x="10" y="2" width="1" height="8" fill="#000"/><rect x="1" y="10" width="10" height="1" fill="#808080"/><rect x="0" y="11" width="11" height="1" fill="#000"/><rect x="11" y="9" width="1" height="2" fill="#808080"/></svg>
<svg class="abs" style="left:30px;top:121px" width="12" height="12" shape-rendering="crispEdges"><rect x="0" y="0" width="11" height="11" fill="#000"/><rect x="1" y="1" width="9" height="9" fill="#c0c0c0"/><rect x="1" y="1" width="8" height="1" fill="#fff"/><rect x="1" y="1" width="1" height="8" fill="#fff"/><rect x="9" y="1" width="1" height="9" fill="#808080"/><rect x="1" y="9" width="9" height="1" fill="#808080"/><rect x="3" y="5" width="5" height="1" fill="#000"/></svg>
<span class="t u" style="letter-spacing:0.331px;font-weight:bold;left:42.50px;top:121px">All Pairs</span>
<span class="t u" style="letter-spacing:1.216px;font-weight:bold;left:220.50px;top:121px">166</span>
<span class="t u" style="letter-spacing:1.095px;font-weight:bold;left:348.50px;top:121px">0,740</span>
<span class="t u" style="letter-spacing:1.215px;font-weight:bold;left:400.10px;top:121px">0,012</span>
<span class="t u" style="letter-spacing:1.275px;font-weight:bold;left:454.80px;top:121px">0,740</span>
<span class="t u" style="letter-spacing:-0.239px;left:66.10px;top:137px">Pair 3</span>
<span class="t u" style="letter-spacing:-0.272px;left:98.10px;top:137px">Finished</span>
<span class="t u" style="left:224.35px;top:137px">163</span>
<span class="t u" style="left:303.27px;top:137px">0,008</span>
<span class="t u" style="left:354.22px;top:137px">0,728</span>
<span class="t u" style="left:406.37px;top:137px">0,375</span>
<span class="t u" style="left:461.37px;top:137px">0,740</span>
<span class="t u" style="left:509.14px;top:137px">179,244</span>
<span class="t u" style="left:575.47px;top:137px">1,152</span>
<span class="t u" style="letter-spacing:-0.239px;left:66.10px;top:153px">Pair 4</span>
<span class="t u" style="letter-spacing:-0.272px;left:98.10px;top:153px">Finished</span>
<span class="t u" style="left:236.58px;top:153px">3</span>
<span class="t u" style="left:303.27px;top:153px">0,020</span>
<span class="t u" style="left:354.22px;top:153px">0,016</span>
<span class="t u" style="left:406.37px;top:153px">0,012</span>
<span class="t u" style="left:461.37px;top:153px">0,037</span>
<span class="t u" style="left:509.14px;top:153px">149,849</span>
<span class="t u" style="left:563.24px;top:153px">123,783</span>
<div class="trk" style="left:1003px;top:77px;width:16px;height:100px"></div>
<div class="sb" style="left:1003px;top:77px"><svg width="16" height="16" shape-rendering="crispEdges" style="position:absolute;left:0;top:0"><rect x="8" y="7" width="1" height="1" fill="#fff"/><rect x="7" y="8" width="3" height="1" fill="#fff"/><rect x="6" y="9" width="5" height="1" fill="#fff"/><rect x="5" y="10" width="7" height="1" fill="#fff"/><rect x="7" y="6" width="1" height="1" fill="#808080"/><rect x="6" y="7" width="3" height="1" fill="#808080"/><rect x="5" y="8" width="5" height="1" fill="#808080"/><rect x="4" y="9" width="7" height="1" fill="#808080"/></svg></div>
<div class="sb" style="left:1003px;top:161px"><svg width="16" height="16" shape-rendering="crispEdges" style="position:absolute;left:0;top:0"><rect x="5" y="7" width="7" height="1" fill="#fff"/><rect x="6" y="8" width="5" height="1" fill="#fff"/><rect x="7" y="9" width="3" height="1" fill="#fff"/><rect x="8" y="10" width="1" height="1" fill="#fff"/><rect x="4" y="6" width="7" height="1" fill="#808080"/><rect x="5" y="7" width="5" height="1" fill="#808080"/><rect x="6" y="8" width="3" height="1" fill="#808080"/><rect x="7" y="9" width="1" height="1" fill="#808080"/></svg></div>
<div class="trk" style="left:5px;top:177px;width:998px;height:16px"></div>
<div class="sb" style="left:5px;top:177px"><svg width="16" height="16" shape-rendering="crispEdges" style="position:absolute;left:0;top:0"><rect x="6" y="8" width="1" height="1" fill="#fff"/><rect x="7" y="7" width="1" height="3" fill="#fff"/><rect x="8" y="6" width="1" height="5" fill="#fff"/><rect x="9" y="5" width="1" height="7" fill="#fff"/><rect x="5" y="7" width="1" height="1" fill="#808080"/><rect x="6" y="6" width="1" height="3" fill="#808080"/><rect x="7" y="5" width="1" height="5" fill="#808080"/><rect x="8" y="4" width="1" height="7" fill="#808080"/></svg></div>
<div class="sb" style="left:987px;top:177px"><svg width="16" height="16" shape-rendering="crispEdges" style="position:absolute;left:0;top:0"><rect x="7" y="5" width="1" height="7" fill="#fff"/><rect x="8" y="6" width="1" height="5" fill="#fff"/><rect x="9" y="7" width="1" height="3" fill="#fff"/><rect x="10" y="8" width="1" height="1" fill="#fff"/><rect x="6" y="4" width="1" height="7" fill="#808080"/><rect x="7" y="5" width="1" height="5" fill="#808080"/><rect x="8" y="6" width="1" height="3" fill="#808080"/><rect x="9" y="7" width="1" height="1" fill="#808080"/></svg></div>
<div style="left:1003px;top:177px;width:16px;height:16px;background:#d4d0c8;"></div>
<div style="left:4px;top:194px;width:1016px;height:1px;background:#808080;"></div>
<div style="left:4px;top:195px;width:1016px;height:2px;background:#c0c0c0;"></div>
<div style="left:4px;top:197px;width:1016px;height:1px;background:#808080;"></div>
<div style="left:4px;top:198px;width:899px;height:492px;background:#fff;"></div>
<div style="left:903px;top:198px;width:1px;height:492px;background:#808080;"></div>
<div style="left:904px;top:198px;width:2px;height:492px;background:#c0c0c0;"></div>
<div style="left:906px;top:198px;width:1px;height:492px;background:#808080;"></div>
<div style="left:907px;top:198px;width:113px;height:492px;background:#fff;"></div>
<div style="left:1021px;top:74px;width:1px;height:618px;background:#fff;"></div>
<div style="left:1022px;top:74px;width:2px;height:620px;background:#404040;"></div>
<div style="left:0px;top:692px;width:1024px;height:1px;background:#808080;"></div>
<div style="left:0px;top:693px;width:1024px;height:1px;background:#404040;"></div>
<div style="left:0px;top:694px;width:1024px;height:1px;background:#b8b5ae;"></div>
<div style="left:0px;top:74px;width:1px;height:619px;background:#fff;"></div>
<svg class="abs" style="left:0;top:198px" width="903" height="492" viewBox="0 198 903 492"><g shape-rendering="crispEdges"><rect x="162" y="246" width="1" height="394" fill="#c0c0c0"/><rect x="250" y="246" width="1" height="394" fill="#c0c0c0"/><rect x="339" y="246" width="1" height="394" fill="#c0c0c0"/><rect x="427" y="246" width="1" height="394" fill="#c0c0c0"/><rect x="516" y="246" width="1" height="394" fill="#c0c0c0"/><rect x="604" y="246" width="1" height="394" fill="#c0c0c0"/><rect x="693" y="246" width="1" height="394" fill="#c0c0c0"/><rect x="781" y="246" width="1" height="394" fill="#c0c0c0"/><rect x="75" y="587" width="795" height="1" fill="#c0c0c0"/><rect x="75" y="534" width="795" height="1" fill="#c0c0c0"/><rect x="75" y="482" width="795" height="1" fill="#c0c0c0"/><rect x="75" y="429" width="795" height="1" fill="#c0c0c0"/><rect x="75" y="377" width="795" height="1" fill="#c0c0c0"/><rect x="75" y="324" width="795" height="1" fill="#c0c0c0"/><rect x="75" y="272" width="795" height="1" fill="#c0c0c0"/><rect x="74" y="245" width="797" height="1" fill="#000"/><rect x="74" y="245" width="1" height="400" fill="#000"/><rect x="870" y="247" width="1" height="398" fill="#000"/><rect x="69" y="640" width="802" height="1" fill="#000"/><rect x="69" y="587" width="5" height="1" fill="#000"/><rect x="69" y="534" width="5" height="1" fill="#000"/><rect x="69" y="482" width="5" height="1" fill="#000"/><rect x="69" y="429" width="5" height="1" fill="#000"/><rect x="69" y="377" width="5" height="1" fill="#000"/><rect x="69" y="324" width="5" height="1" fill="#000"/><rect x="69" y="272" width="5" height="1" fill="#000"/><rect x="69" y="245" width="5" height="1" fill="#000"/><rect x="162" y="640" width="1" height="1" fill="#c0c0c0"/><rect x="162" y="641" width="1" height="4" fill="#000"/><rect x="250" y="640" width="1" height="1" fill="#c0c0c0"/><rect x="250" y="641" width="1" height="4" fill="#000"/><rect x="339" y="640" width="1" height="1" fill="#c0c0c0"/><rect x="339" y="641" width="1" height="4" fill="#000"/><rect x="427" y="640" width="1" height="1" fill="#c0c0c0"/><rect x="427" y="641" width="1" height="4" fill="#000"/><rect x="516" y="640" width="1" height="1" fill="#c0c0c0"/><rect x="516" y="641" width="1" height="4" fill="#000"/><rect x="604" y="640" width="1" height="1" fill="#c0c0c0"/><rect x="604" y="641" width="1" height="4" fill="#000"/><rect x="693" y="640" width="1" height="1" fill="#c0c0c0"/><rect x="693" y="641" width="1" height="4" fill="#000"/><rect x="781" y="640" width="1" height="1" fill="#c0c0c0"/><rect x="781" y="641" width="1" height="4" fill="#000"/></g><polyline shape-rendering="crispEdges" fill="none" stroke="#800080" stroke-width="1" points="74.5,272.3 79,257.3 81.6,254.5 95.5,254.5 96.8,255.5 117.9,255.5 122.4,261.4 127.3,254.5 130.5,255.5 154,255.5 155,254.5 158,254.5 161,255.5 284.6,255.5 286,254.5 289,254.5 291,255.5 369,255.5 374.4,286.5 379.4,254.5 382.5,255.5 387.6,254.5 395.4,254.5 397,255.5 400,255.5 402,254.5 405,254.5 406.5,255.5 480.7,255.5 485.5,252.5 490.4,255.5 591.5,255.5 596,252.3 601.7,255.5 630,255.5 630.8,272 635.3,442.3 642.3,300 644.6,254.5 646.6,255.5 722.5,255.5 727.3,252.6 731.3,255.3 736.5,251.2 742,256.5 745.9,254.3 748.8,254.3 749.8,255.5 867,255.5"/><polyline shape-rendering="crispEdges" fill="none" stroke="#008080" stroke-width="1" points="74.5,633.5 225,633.5 226,632.5 387,632.5 632,620.5 736,620.5"/></svg>
<span class="t u19" style="letter-spacing:0.272px;font-size:19px;line-height:22px;left:13.50px;top:212px">Throughput</span>
<span class="t u" style="letter-spacing:-0.057px;left:31.50px;top:635px">0,0000</span>
<span class="t u" style="letter-spacing:-0.057px;left:31.50px;top:582px">0,1000</span>
<span class="t u" style="letter-spacing:-0.057px;left:31.50px;top:529px">0,2000</span>
<span class="t u" style="letter-spacing:-0.057px;left:31.50px;top:477px">0,3000</span>
<span class="t u" style="letter-spacing:-0.057px;left:31.50px;top:424px">0,4000</span>
<span class="t u" style="letter-spacing:-0.057px;left:31.50px;top:372px">0,5000</span>
<span class="t u" style="letter-spacing:-0.057px;left:31.50px;top:319px">0,6000</span>
<span class="t u" style="letter-spacing:-0.057px;left:31.50px;top:267px">0,7000</span>
<span class="t u" style="letter-spacing:-0.057px;left:31.50px;top:240px">0,7500</span>
<span class="t u" style="letter-spacing:-0.072px;left:56.35px;top:646px">0:00:00</span>
<span class="t u" style="letter-spacing:-0.072px;left:144.35px;top:646px">0:00:20</span>
<span class="t u" style="letter-spacing:-0.072px;left:232.35px;top:646px">0:00:40</span>
<span class="t u" style="letter-spacing:-0.072px;left:321.35px;top:646px">0:01:00</span>
<span class="t u" style="letter-spacing:-0.072px;left:409.35px;top:646px">0:01:20</span>
<span class="t u" style="letter-spacing:-0.072px;left:498.35px;top:646px">0:01:40</span>
<span class="t u" style="letter-spacing:-0.072px;left:586.35px;top:646px">0:02:00</span>
<span class="t u" style="letter-spacing:-0.072px;left:675.35px;top:646px">0:02:20</span>
<span class="t u" style="letter-spacing:-0.072px;left:763.35px;top:646px">0:02:40</span>
<span class="t u" style="letter-spacing:-0.072px;left:852.35px;top:646px">0:03:00</span>
<span class="t u13" style="letter-spacing:0.099px;font-size:13px;line-height:15px;left:403.50px;top:667px">Elapsed time (h:mm:ss)</span>
<span class="t" style="font-size:13px;line-height:15px;left:10.8px;top:460px;transform:rotate(-90deg) scaleY(1.1);transform-origin:0 0;letter-spacing:-0.2px">Mbps</span>
<span class="t u13" style="letter-spacing:0.179px;font-size:13px;line-height:15px;font-weight:bold;left:939.30px;top:202px">Legend</span>
<div style="left:907px;top:220px;width:113px;height:1px;background:#000;"></div>
<div style="left:907px;top:220px;width:1px;height:470px;background:#000;"></div>
<div style="left:1019px;top:220px;width:1px;height:470px;background:#000;"></div>
<div style="left:914px;top:227px;width:19px;height:1px;background:#800080;"></div>
<div style="left:914px;top:240px;width:19px;height:1px;background:#008080;"></div>
<span class="t u" style="letter-spacing:-0.286px;color:#800080;left:936.20px;top:222px">Pair 3 -- hi</span>
<span class="t u" style="letter-spacing:-0.329px;color:#008080;left:936.20px;top:235px">Pair 4 -- med</span>
<div class="trk" style="left:1003px;top:221px;width:16px;height:453px"></div>
<div class="sb" style="left:1003px;top:221px"><svg width="16" height="16" shape-rendering="crispEdges" style="position:absolute;left:0;top:0"><rect x="8" y="7" width="1" height="1" fill="#fff"/><rect x="7" y="8" width="3" height="1" fill="#fff"/><rect x="6" y="9" width="5" height="1" fill="#fff"/><rect x="5" y="10" width="7" height="1" fill="#fff"/><rect x="7" y="6" width="1" height="1" fill="#808080"/><rect x="6" y="7" width="3" height="1" fill="#808080"/><rect x="5" y="8" width="5" height="1" fill="#808080"/><rect x="4" y="9" width="7" height="1" fill="#808080"/></svg></div>
<div class="sb" style="left:1003px;top:658px"><svg width="16" height="16" shape-rendering="crispEdges" style="position:absolute;left:0;top:0"><rect x="5" y="7" width="7" height="1" fill="#fff"/><rect x="6" y="8" width="5" height="1" fill="#fff"/><rect x="7" y="9" width="3" height="1" fill="#fff"/><rect x="8" y="10" width="1" height="1" fill="#fff"/><rect x="4" y="6" width="7" height="1" fill="#808080"/><rect x="5" y="7" width="5" height="1" fill="#808080"/><rect x="6" y="8" width="3" height="1" fill="#808080"/><rect x="7" y="9" width="1" height="1" fill="#808080"/></svg></div>
<div class="trk" style="left:908px;top:674px;width:95px;height:16px"></div>
<div class="sb" style="left:908px;top:674px"><svg width="16" height="16" shape-rendering="crispEdges" style="position:absolute;left:0;top:0"><rect x="6" y="8" width="1" height="1" fill="#fff"/><rect x="7" y="7" width="1" height="3" fill="#fff"/><rect x="8" y="6" width="1" height="5" fill="#fff"/><rect x="9" y="5" width="1" height="7" fill="#fff"/><rect x="5" y="7" width="1" height="1" fill="#808080"/><rect x="6" y="6" width="1" height="3" fill="#808080"/><rect x="7" y="5" width="1" height="5" fill="#808080"/><rect x="8" y="4" width="1" height="7" fill="#808080"/></svg></div>
<div class="sb" style="left:987px;top:674px"><svg width="16" height="16" shape-rendering="crispEdges" style="position:absolute;left:0;top:0"><rect x="7" y="5" width="1" height="7" fill="#fff"/><rect x="8" y="6" width="1" height="5" fill="#fff"/><rect x="9" y="7" width="1" height="3" fill="#fff"/><rect x="10" y="8" width="1" height="1" fill="#fff"/><rect x="6" y="4" width="1" height="7" fill="#808080"/><rect x="7" y="5" width="1" height="5" fill="#808080"/><rect x="8" y="6" width="1" height="3" fill="#808080"/><rect x="9" y="7" width="1" height="1" fill="#808080"/></svg></div>
<div style="left:1003px;top:674px;width:16px;height:16px;background:#d4d0c8;"></div>
<div class="sf" style="left:3px;top:698px;width:70px;height:18px"></div>
<div class="sf" style="left:77px;top:698px;width:163px;height:18px"></div>
<div class="sf" style="left:244px;top:698px;width:160px;height:18px"></div>
<div class="sf" style="left:408px;top:698px;width:136px;height:18px"></div>
<div class="sf" style="left:548px;top:698px;width:96px;height:18px"></div>
<span class="t u" style="letter-spacing:-0.286px;left:6.50px;top:701px">Pairs: 2</span>
<span class="t u" style="letter-spacing:-0.105px;left:80.00px;top:701px">Start: 23.09.2005, 14:03:36</span>
<span class="t u" style="letter-spacing:-0.087px;left:247.00px;top:701px">End: 23.09.2005, 14:06:36</span>
<span class="t u" style="letter-spacing:-0.147px;left:411.20px;top:701px">Run time: 00:03:00</span>
<span class="t u" style="letter-spacing:-0.142px;left:551.25px;top:701px">Ran to completion</span>
</div></body></html>
